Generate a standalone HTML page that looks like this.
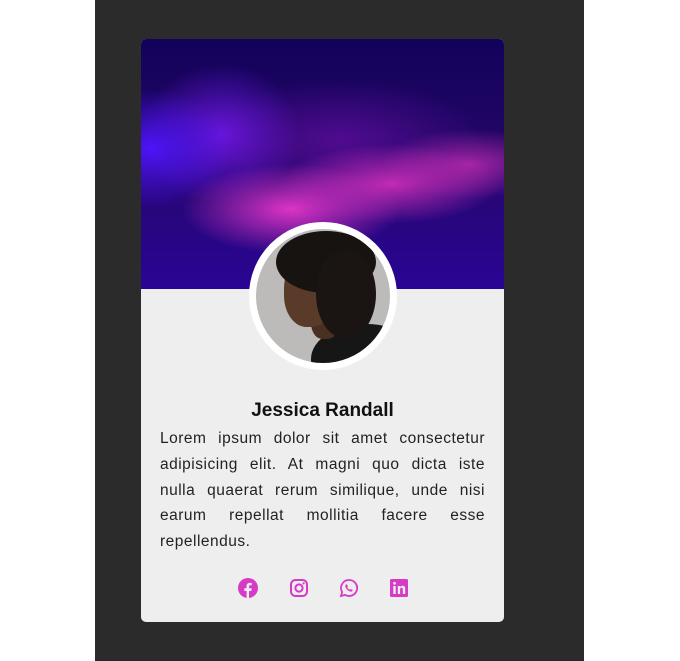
<!DOCTYPE html>
<html><head><style>
body{margin:0;width:680px;height:661px;background:#fff;position:relative;overflow:hidden;font-family:"Liberation Sans",sans-serif}
.panel{position:absolute;left:95px;top:0;width:489px;height:661px;background:#2b2b2b}
.card{position:absolute;left:141px;top:39px;width:363px;height:583px;background:#eeeeee;border-radius:5px;overflow:hidden}
.hdr{position:absolute;left:0;top:0;width:363px;height:250px;
background:
radial-gradient(ellipse 110px 45px at 150px 170px,rgba(230,55,200,.95),rgba(230,55,200,0)),
radial-gradient(ellipse 110px 40px at 250px 145px,rgba(220,50,190,.85),rgba(220,50,190,0)),
radial-gradient(ellipse 90px 35px at 330px 125px,rgba(200,45,180,.75),rgba(200,45,180,0)),
radial-gradient(ellipse 80px 60px at 10px 110px,rgba(80,20,255,.95),rgba(80,20,255,0)),
radial-gradient(ellipse 80px 70px at 80px 95px,rgba(120,25,245,.8),rgba(120,25,245,0)),
radial-gradient(ellipse 140px 60px at 200px 100px,rgba(110,15,170,.6),rgba(110,15,170,0)),
linear-gradient(180deg,#12025a 0%,#240668 45%,#2a0595 100%)}
.av{position:absolute;left:249px;top:222px;width:134px;height:134px;border:7px solid #fff;border-radius:50%;overflow:hidden;background:#bdbbb9}
.av div{position:absolute}
.name{position:absolute;left:141px;width:363px;top:400px;text-align:center;font-weight:bold;font-size:19px;color:#111}
.txt{position:absolute;left:160px;width:325px;top:426px;font-size:15.5px;line-height:25.8px;color:#222;letter-spacing:.5px}
.txt span{display:block;text-align:justify;text-align-last:justify}
.txt span.l{text-align-last:left}
.ic{position:absolute;top:578px;width:20px;height:20px}
</style></head><body>
<div class="panel"></div>
<div class="card"><div class="hdr"></div></div>
<div class="av">
<div style="left:55px;top:95px;width:110px;height:70px;border-radius:50%;background:#161616"></div>
<div style="left:55px;top:70px;width:28px;height:40px;background:#4a3020;border-radius:40%"></div>
<div style="left:28px;top:28px;width:50px;height:70px;border-radius:45%;background:#5a3a28"></div>
<div style="left:20px;top:2px;width:100px;height:62px;border-radius:50%;background:#171310"></div>
<div style="left:60px;top:20px;width:60px;height:90px;border-radius:50%;background:#1a1512"></div>
</div>
<div class="name">Jessica Randall</div>
<div class="txt">
<span>Lorem ipsum dolor sit amet consectetur</span>
<span>adipisicing elit. At magni quo dicta iste</span>
<span>nulla quaerat rerum similique, unde nisi</span>
<span>earum repellat mollitia facere esse</span>
<span class="l">repellendus.</span>
</div>
<svg class="ic" style="left:238px" viewBox="0 0 20 20"><circle cx="10" cy="10" r="10" fill="#d63bc6"/><path d="M11 20v-7h2.3l.4-2.7H11V8.6c0-.8.3-1.3 1.4-1.3h1.4V5c-.3 0-1.1-.1-2-.1-2 0-3.3 1.2-3.3 3.4v2H6.3V13h2.3v7z" fill="#eee"/></svg>
<svg class="ic" style="left:289px" viewBox="0 0 20 20"><rect x="2" y="2" width="16" height="16" rx="4.5" fill="none" stroke="#d63bc6" stroke-width="2"/><circle cx="10" cy="10" r="3.6" fill="none" stroke="#d63bc6" stroke-width="2"/><circle cx="14.6" cy="5.4" r="1.1" fill="#d63bc6"/></svg>
<svg class="ic" style="left:339px" viewBox="0 0 20 20"><path d="M10 2a8 8 0 0 0-6.9 12L2 18l4.1-1.1A8 8 0 1 0 10 2z" fill="none" stroke="#d63bc6" stroke-width="1.8"/><path d="M7 6.5c.5-.4 1-.3 1.2.2l.6 1.4c.1.4-.3.8-.6 1.1.6 1.2 1.5 2 2.6 2.6.3-.3.7-.8 1.1-.6l1.4.6c.5.2.5.8.1 1.2-.9.9-2.2.8-3.6-.1-1.3-.8-2.6-2.1-3.2-3.4-.5-1.2-.4-2.3.4-3z" fill="#d63bc6"/></svg>
<svg class="ic" style="left:389px" viewBox="0 0 20 20"><rect x="1" y="1" width="18" height="18" rx="1.5" fill="#d63bc6"/><rect x="4.3" y="8" width="2.4" height="8" fill="#eee"/><circle cx="5.5" cy="5.3" r="1.4" fill="#eee"/><path d="M8.8 8h2.3v1.1c.4-.7 1.3-1.3 2.5-1.3 2.2 0 2.6 1.4 2.6 3.3V16h-2.4v-4.3c0-1 0-2-1.3-2s-1.4.9-1.4 1.9V16H8.8z" fill="#eee"/></svg>
</body></html>
